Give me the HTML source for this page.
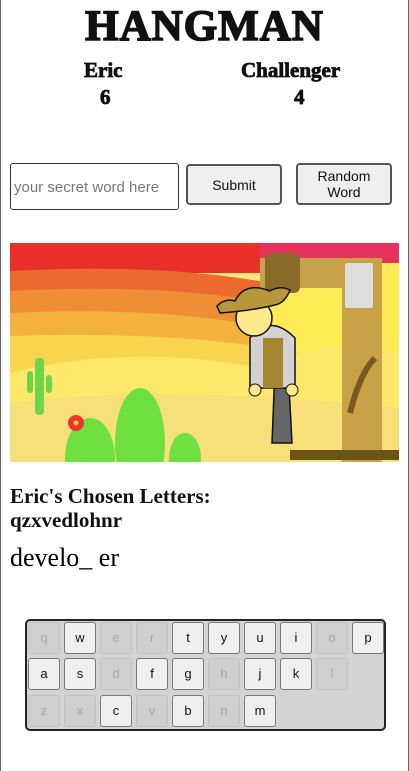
<!DOCTYPE html>
<html><head><style>
*{margin:0;padding:0;box-sizing:border-box}
body{width:409px;height:771px;background:#fff;position:relative;overflow:hidden;font-family:"Liberation Sans",sans-serif}
.a{position:absolute}
.t{font-family:"Liberation Serif",serif;font-weight:bold;color:#111}
.w{-webkit-text-stroke:0.8px #111}
.btn{position:absolute;background:#efefef;border:2px solid #555;border-radius:4px;font-size:14px;text-align:center;color:#111;display:flex;align-items:center;justify-content:center;line-height:16px}
.kb{position:absolute;left:25px;top:619px;width:361px;height:112px;background:#d3d3d3;border:2px solid #222;border-radius:5px}
.k{position:absolute;width:32px;height:32px;border:1px solid #777;border-radius:3px;background:#efefef;font-size:13px;text-align:center;line-height:30px;color:#111}
.k.d{background:#cfcfcf;border-color:#c2c2c2;color:#a8a8a8}
</style></head><body>
<div class="a" style="left:0;top:0;width:1px;height:771px;background:#666"></div>
<div class="a" style="right:0;top:0;width:1px;height:771px;background:#666"></div>
<div class="a t" style="left:0;width:409px;top:2px;text-align:center;font-size:43px;letter-spacing:1px;-webkit-text-stroke:1.6px #111">HANGMAN</div>
<div class="a t w" style="left:84px;top:58px;font-size:21px">Eric</div>
<div class="a t w" style="left:100px;top:85px;font-size:21px">6</div>
<div class="a t w" style="left:241px;top:58px;font-size:21px">Challenger</div>
<div class="a t w" style="left:294px;top:85px;font-size:21px">4</div>
<div class="a" style="left:10px;top:163px;width:169px;height:47px;border:1px solid #333;border-radius:3px;font-size:15px;color:#777;padding:15px 0 0 3px;white-space:nowrap;overflow:hidden">your secret word here</div>
<div class="btn" style="left:186px;top:164px;width:96px;height:41px">Submit</div>
<div class="btn" style="left:296px;top:163px;width:96px;height:42px">Random<br>Word</div>
<svg class="a" style="left:10px;top:243px" width="389" height="219" viewBox="0 0 389 219">
<rect width="389" height="219" fill="#fbe57a"/>
<rect width="389" height="30" fill="#e9302a"/>
<rect x="250" width="139" height="20" fill="#e8325e"/>
<path d="M0 28 Q150 20 260 40 L260 60 Q150 40 0 50Z" fill="#ed6a2e"/>
<path d="M0 48 Q150 40 260 60 L260 85 Q150 65 0 72Z" fill="#f08e35"/>
<path d="M0 70 Q150 63 260 85 L260 110 Q150 90 0 95Z" fill="#f3b23c"/>
<path d="M250 20 L389 20 L389 219 L250 219Z" fill="#fdea55"/>
<path d="M0 93 Q150 88 260 105 L389 130 L389 219 L0 219Z" fill="#f9d44d"/>
<path d="M0 130 Q120 100 250 125 Q330 90 389 110 L389 219 L0 219Z" fill="#fde86a"/>
<path d="M0 160 Q150 140 389 165 L389 219 L0 219Z" fill="#f7df7a"/>
<rect x="250" y="15" width="110" height="30" fill="#c8a24a"/>
<rect x="332" y="15" width="40" height="204" fill="#c9a248"/>
<rect x="335" y="20" width="28" height="45" fill="#dedede" rx="2"/>
<path d="M340 170 Q350 130 365 115" stroke="#7a5a20" stroke-width="6" fill="none"/>
<rect x="280" y="207" width="109" height="10" fill="#6b5418"/>
<rect x="255" y="10" width="35" height="40" fill="#8a6a28" rx="6"/>
<path d="M255 115 L265 125 L262 200 L282 200 L278 125Z" fill="#666" stroke="#111" stroke-width="1.5"/>
<path d="M240 95 Q260 70 285 95 L285 145 L240 145Z" fill="#d2d2d2" stroke="#111" stroke-width="1.5"/>
<rect x="253" y="95" width="20" height="50" fill="#a58530"/>
<circle cx="245" cy="147" r="6" fill="#fde88a" stroke="#111"/>
<circle cx="282" cy="147" r="6" fill="#fde88a" stroke="#111"/>
<circle cx="244" cy="75" r="18" fill="#fde88a" stroke="#111" stroke-width="1.5"/>
<path d="M207 63 Q215 55 225 58 Q235 38 260 48 Q270 42 280 47 Q275 60 265 62 Q240 68 210 70Z" fill="#b8963c" stroke="#111" stroke-width="1.5"/>
<rect x="25" y="115" width="9" height="57" rx="4" fill="#6ed44a"/>
<rect x="17" y="128" width="6" height="22" rx="3" fill="#6ed44a"/>
<rect x="36" y="132" width="6" height="18" rx="3" fill="#6ed44a"/>
<ellipse cx="80" cy="215" rx="25" ry="40" fill="#6ee040"/>
<ellipse cx="130" cy="200" rx="25" ry="55" fill="#6ee040"/>
<ellipse cx="175" cy="215" rx="16" ry="25" fill="#6ee040"/>
<circle cx="66" cy="180" r="8" fill="#e33"/><circle cx="66" cy="180" r="2.5" fill="#ffd21a"/>
</svg>
<div class="a t" style="left:10px;top:484px;font-size:21px;line-height:24px">Eric's Chosen Letters:<br>qzxvedlohnr</div>
<div class="a" style="left:10px;top:543px;font-family:'Liberation Serif',serif;font-size:26px">develo_ er</div>
<div class="kb">
<div class="k d" style="left:1px;top:1px">q</div><div class="k" style="left:37px;top:1px">w</div><div class="k d" style="left:73px;top:1px">e</div><div class="k d" style="left:109px;top:1px">r</div><div class="k" style="left:145px;top:1px">t</div><div class="k" style="left:181px;top:1px">y</div><div class="k" style="left:217px;top:1px">u</div><div class="k" style="left:253px;top:1px">i</div><div class="k d" style="left:289px;top:1px">o</div><div class="k" style="left:325px;top:1px">p</div>
<div class="k" style="left:1px;top:37px">a</div><div class="k" style="left:37px;top:37px">s</div><div class="k d" style="left:73px;top:37px">d</div><div class="k" style="left:109px;top:37px">f</div><div class="k" style="left:145px;top:37px">g</div><div class="k d" style="left:181px;top:37px">h</div><div class="k" style="left:217px;top:37px">j</div><div class="k" style="left:253px;top:37px">k</div><div class="k d" style="left:289px;top:37px">l</div>
<div class="k d" style="left:1px;top:74px">z</div><div class="k d" style="left:37px;top:74px">x</div><div class="k" style="left:73px;top:74px">c</div><div class="k d" style="left:109px;top:74px">v</div><div class="k" style="left:145px;top:74px">b</div><div class="k d" style="left:181px;top:74px">n</div><div class="k" style="left:217px;top:74px">m</div>
</div>
</body></html>
